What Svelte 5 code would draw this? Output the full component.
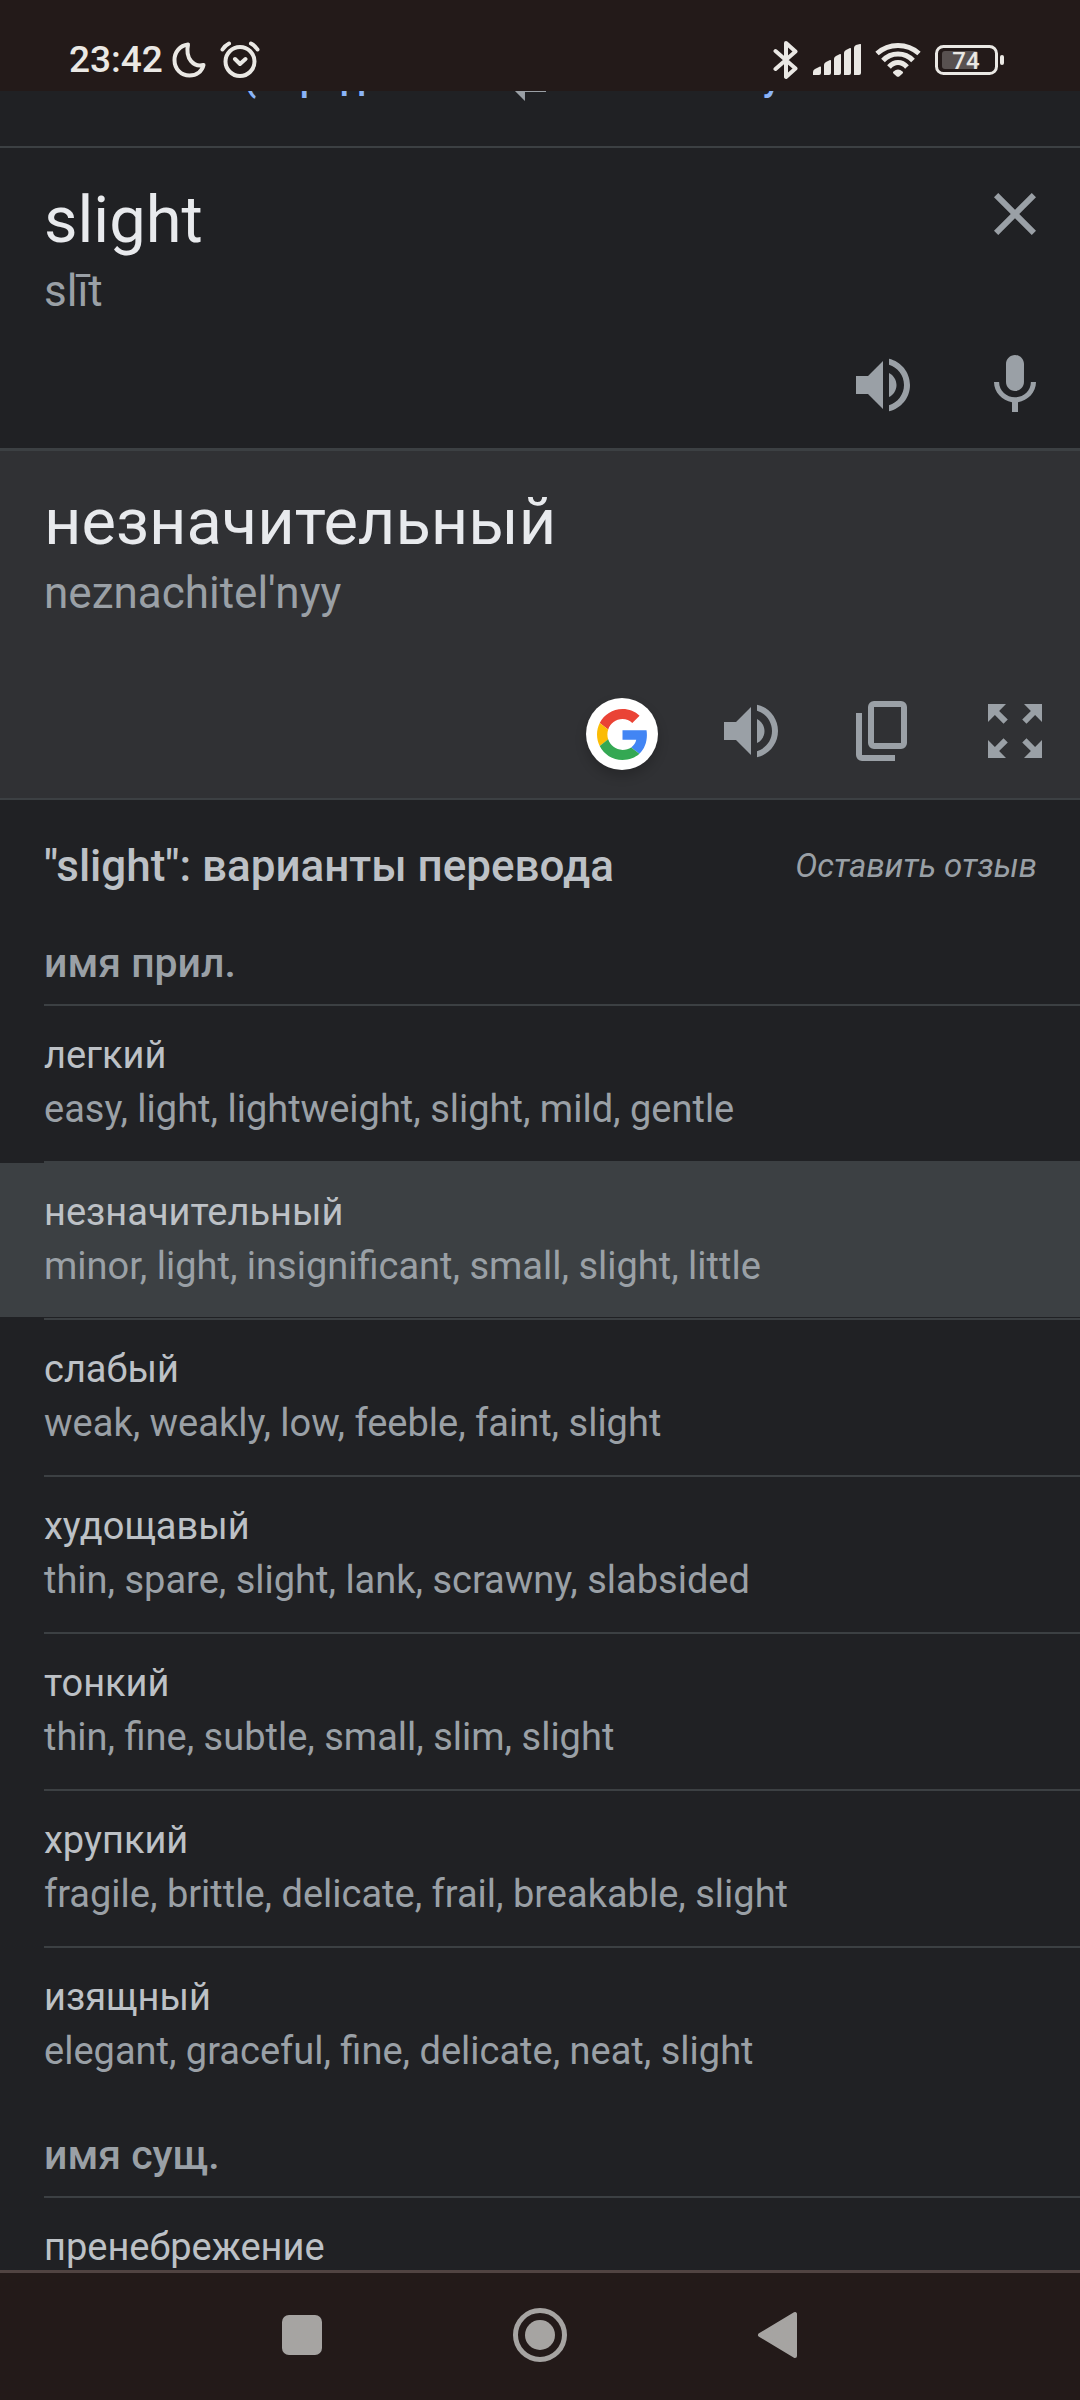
<script lang="ts">
  let query = $state('slight');

  const adjectives = [
    { word: 'легкий', back: 'easy, light, lightweight, slight, mild, gentle' },
    { word: 'незначительный', back: 'minor, light, insignificant, small, slight, little', active: true },
    { word: 'слабый', back: 'weak, weakly, low, feeble, faint, slight' },
    { word: 'худощавый', back: 'thin, spare, slight, lank, scrawny, slabsided' },
    { word: 'тонкий', back: 'thin, fine, subtle, small, slim, slight' },
    { word: 'хрупкий', back: 'fragile, brittle, delicate, frail, breakable, slight' },
    { word: 'изящный', back: 'elegant, graceful, fine, delicate, neat, slight' }
  ];
  const groups = [
    { name: 'имя прил.', items: adjectives },
    { name: 'имя сущ.', items: [{ word: 'пренебрежение', back: '' }] }
  ];
</script>

{#snippet speaker()}
  <svg viewBox="0 0 24 24"><path d="M3 9v6h4l5 5V4L7 9H3zm13.5 3c0-1.77-1.02-3.29-2.5-4.03v8.05c1.48-.73 2.5-2.25 2.5-4.02zM14 3.23v2.06c2.89.86 5 3.54 5 6.71s-2.11 5.85-5 6.71v2.06c4.01-.91 7-4.49 7-8.77s-2.99-7.86-7-8.77z" /></svg>
{/snippet}

<div class="screen">
  <header class="status">
    <div class="left">
      <time>23:42</time>
      <svg class="moon" viewBox="0 0 34 36"><path d="M16 2.5C8 3.5 2.500 10 2.500 18c0 9 6.500 15.500 15 15.500 7 0 12.500-4 14-10.500C22 25.500 13 17 16 2.500z" /></svg>
      <svg class="alarm" viewBox="0 0 40 38">
        <circle cx="20" cy="20.500" r="14.500" />
        <path d="M2.500 8.500Q5 4.500 9 2.500M37.500 8.500Q35 4.500 31 2.500M15 18l5 5 5.500-5" />
      </svg>
    </div>
    <div class="right">
      <svg class="bt" viewBox="0 0 26 40"><path d="M2.500 11l20 17.500L13 37V3l9.500 8.500L2.500 29" /></svg>
      <svg class="signal" viewBox="0 0 48 32"><path d="M0 31v-3q0-2 2-3l5-2.500q1-.5 1 1V29q0 2-2 2zM11 31V21q0-2 2-3l4-2q1-.5 1 1v12q0 2-2 2zM21 31V15q0-2 2-3l4-2q1-.5 1 1v18q0 2-2 2zM31 31V9q0-2 2-3l4-2q1-.5 1 1v24q0 2-2 2zM41 31V4q0-2 2-3l4-1q1-.5 1 1v28q0 2-2 2z" /></svg>
      <svg class="wifi" viewBox="0 0 46 34">
        <path class="arc" d="M2 10.500Q11 2.500 23 2.500T44 10.500M8 17.500Q14 11 23 11T38 17.500M14 24Q18 19.500 23 19.500T32 24" />
        <path d="M18.500 28.500q4.500-4 9 0c1 1 .5 1.500-.5 2.500l-2.500 2.200q-1.500 1-3 0L19 31c-1-1-1.500-1.500-.5-2.500z" />
      </svg>
      <svg class="battery" viewBox="0 0 70 30">
        <rect class="shell" x="1.500" y="1.500" width="60" height="27" rx="7" />
        <rect class="charge" x="7" y="6" width="36" height="18" rx="3" />
        <rect x="65" y="10" width="4" height="10" rx="2" />
        <text x="31" y="24" text-anchor="middle">74</text>
      </svg>
    </div>
  </header>

  <main>
    <nav class="langs">
      <button class="lang">английский (определен автоматически)</button>
      <button class="swap" aria-label="Поменять языки"><svg viewBox="0 0 24 24"><path d="M6.990 11L3 15l3.990 4v-3H14v-2H6.990v-3zM21 9l-3.990-4v3H10v2h7.010v3L21 9z" /></svg></button>
      <button class="lang">Русский</button>
    </nav>

    <section class="source">
      <div class="entry">
        <div class="texts">
          <input class="big" type="text" aria-label="Исходный текст" bind:value={query} />
          <p class="sub">slīt</p>
        </div>
        <button class="icon" aria-label="Очистить"><svg viewBox="0 0 24 24"><path d="M19 6.410L17.590 5 12 10.590 6.410 5 5 6.410 10.590 12 5 17.590 6.410 19 12 13.410 17.590 19 19 17.590 13.410 12z" /></svg></button>
      </div>
      <div class="actions">
        <button class="icon" aria-label="Прослушать">{@render speaker()}</button>
        <button class="icon" aria-label="Голосовой ввод"><svg viewBox="0 0 24 24"><path d="M12 14c1.660 0 2.990-1.340 2.990-3L15 5c0-1.660-1.340-3-3-3S9 3.340 9 5v6c0 1.660 1.340 3 3 3zm5.300-3c0 3-2.540 5.100-5.300 5.100S6.700 14 6.700 11H5c0 3.410 2.720 6.230 6 6.720V21h2v-3.280c3.280-.48 6-3.300 6-6.720h-1.700z" /></svg></button>
      </div>
    </section>

    <section class="target">
      <div>
        <p class="big">незначительный</p>
        <p class="sub">neznachitel'nyy</p>
      </div>
      <div class="tools">
        <button class="google" aria-label="Искать в Google">
          <svg viewBox="0 0 48 48">
            <path fill="#ea4335" d="M24 9.500c3.540 0 6.710 1.220 9.210 3.600l6.850-6.850C35.900 2.380 30.470 0 24 0 14.620 0 6.510 5.380 2.560 13.220l7.980 6.190C12.430 13.720 17.740 9.500 24 9.500z" />
            <path fill="#4285f4" d="M46.980 24.550c0-1.570-.15-3.090-.38-4.550H24v9.020h12.940c-.58 2.960-2.260 5.480-4.780 7.180l7.730 6c4.510-4.180 7.090-10.360 7.090-17.650z" />
            <path fill="#fbbc05" d="M10.530 28.590c-.48-1.450-.76-2.990-.76-4.590s.27-3.140.76-4.590l-7.980-6.190C.92 16.460 0 20.120 0 24c0 3.880.92 7.540 2.560 10.780l7.970-6.190z" />
            <path fill="#34a853" d="M24 48c6.480 0 11.930-2.130 15.890-5.810l-7.730-6c-2.150 1.450-4.920 2.300-8.160 2.300-6.260 0-11.570-4.220-13.470-9.910l-7.980 6.190C6.510 42.620 14.620 48 24 48z" />
          </svg>
        </button>
        <div class="actions">
          <button class="icon" aria-label="Прослушать перевод">{@render speaker()}</button>
          <button class="icon" aria-label="Копировать"><svg viewBox="0 0 24 24"><path d="M9 18q-.825 0-1.412-.587Q7 16.825 7 16V4q0-.825.588-1.413Q8.175 2 9 2h9q.825 0 1.413.587Q20 3.175 20 4v12q0 .825-.587 1.413Q18.825 18 18 18Zm0-2h9V4H9v12Zm-4 6q-.825 0-1.413-.587Q3 20.825 3 20V6h2v14h11v2Z" /></svg></button>
          <button class="icon" aria-label="На весь экран"><svg viewBox="0 0 24 24"><path d="M15 3l2.300 2.300-2.890 2.870 1.420 1.420L18.700 6.700 21 9V3h-6zM3 9l2.300-2.300 2.870 2.890 1.420-1.420L6.700 5.300 9 3H3v6zm6 12l-2.300-2.300 2.890-2.870-1.420-1.420L5.300 17.300 3 15v6h6zm12-6l-2.300 2.300-2.870-2.890-1.420 1.420 2.890 2.870L15 21h6v-6z" /></svg></button>
        </div>
      </div>
    </section>

    <section class="variants">
      <div class="title">
        <h1>"slight": варианты перевода</h1>
        <a href="#feedback">Оставить отзыв</a>
      </div>
      {#each groups as group}
        <h2>{group.name}</h2>
        <ul>
          {#each group.items as item}
            <li>
              <button class="row" class:active={item.active}>
                <span class="word">{item.word}</span>
                <span class="back">{item.back}</span>
              </button>
            </li>
          {/each}
        </ul>
      {/each}
    </section>
  </main>

  <footer>
    <button aria-label="Недавние"><svg viewBox="0 0 54 54"><rect x="7" y="7" width="40" height="40" rx="7" /></svg></button>
    <button aria-label="Домой"><svg viewBox="0 0 54 54"><circle class="ring" cx="27" cy="27" r="24.500" /><circle cx="27" cy="27" r="15" /></svg></button>
    <button aria-label="Назад"><svg viewBox="0 0 54 54"><path class="tri" d="M9 27L44 6v42z" /></svg></button>
  </footer>
</div>

<style>
  :global(body) {
    margin: 0;
    background: #202124;
  }
  .screen {
    height: 100vh;
    display: flex;
    flex-direction: column;
    background: #202124;
    color: #9aa0a6;
    font-family: Roboto, 'Noto Sans', sans-serif;
  }
  button,
  input {
    margin: 0;
    padding: 0;
    border: 0;
    background: none;
    color: inherit;
    font: inherit;
    outline: none;
  }
  h1,
  h2,
  p,
  ul {
    margin: 0;
    padding: 0;
    list-style: none;
  }
  svg {
    display: block;
    fill: currentColor;
  }

  .status {
    flex: none;
    height: 91px;
    box-sizing: border-box;
    padding: 28px 75px 0 69px;
    display: flex;
    justify-content: space-between;
    align-items: center;
    background: #231a19;
    color: #eae8e4;
  }
  .left,
  .right {
    display: flex;
    align-items: center;
  }
  .right {
    gap: 14px;
  }
  time {
    font-size: 37px;
    font-weight: 500;
    line-height: 44px;
    margin-right: 9px;
  }
  .moon,
  .alarm,
  .bt {
    fill: none;
    stroke: currentColor;
    stroke-width: 4;
    stroke-linecap: round;
    stroke-linejoin: round;
  }
  .moon {
    width: 34px;
    height: 36px;
    margin-right: 14px;
  }
  .alarm {
    width: 40px;
    height: 38px;
  }
  .bt {
    width: 26px;
    height: 40px;
  }
  .signal {
    width: 48px;
    height: 32px;
  }
  .wifi {
    width: 46px;
    height: 34px;
  }
  .arc {
    fill: none;
    stroke: currentColor;
    stroke-width: 5;
  }
  .battery {
    width: 70px;
    height: 30px;
  }
  .shell {
    fill: none;
    stroke: currentColor;
    stroke-width: 3;
  }
  .charge {
    fill: #585150;
  }
  .battery text {
    font-size: 24px;
    font-weight: 500;
  }

  main {
    flex: 1;
    min-height: 0;
    overflow: hidden;
  }
  .langs {
    height: 55px;
    overflow: hidden;
    border-bottom: 2px solid #3c4043;
    display: flex;
    align-items: flex-end;
  }
  .lang {
    flex: 1;
    min-width: 0;
    padding: 0 60px 47px 27px;
    overflow: hidden;
    text-overflow: ellipsis;
    white-space: nowrap;
    color: #8ab4f8;
    font-size: 38px;
    font-weight: 500;
    line-height: 44px;
  }
  .swap {
    padding-bottom: 30px;
  }
  .swap svg,
  .icon svg {
    width: 72px;
    height: 72px;
  }

  .source {
    padding: 30px 29px 27px 44px;
  }
  .entry {
    display: flex;
    align-items: flex-start;
  }
  .texts {
    flex: 1;
    min-width: 0;
    min-height: 171px;
  }
  .big {
    display: block;
    width: 100%;
    height: 84px;
    margin-bottom: 4px;
    font-size: 65px;
    line-height: 84px;
    color: #e8eaed;
  }
  .sub {
    font-size: 44px;
    line-height: 50px;
  }
  .actions {
    display: flex;
    justify-content: flex-end;
    gap: 60px;
  }

  .target {
    padding: 29px 29px 28px 44px;
    border-top: 3px solid #3c4043;
    background: #303134;
  }
  .tools {
    margin-top: 77px;
    display: flex;
    justify-content: flex-end;
    align-items: flex-end;
    gap: 57px;
  }
  .tools .actions {
    padding-bottom: 3px;
  }
  .google {
    width: 72px;
    height: 72px;
    border-radius: 50%;
    background: #fff;
    display: grid;
    place-items: center;
    box-shadow: 0 6px 12px rgba(0, 0, 0, 0.2);
  }
  .google svg {
    width: 51px;
    height: 51px;
  }

  .variants {
    border-top: 2px solid #3c4043;
  }
  .title {
    padding: 36px 43px 15px 44px;
    display: flex;
    justify-content: space-between;
    align-items: center;
  }
  h1 {
    color: #bdc1c6;
    font-size: 44px;
    font-weight: 500;
    line-height: 60px;
  }
  .title a {
    color: inherit;
    font-size: 33px;
    font-style: italic;
    line-height: 60px;
    text-decoration: none;
  }
  h2 {
    padding: 25px 44px 14px;
    font-size: 41px;
    font-weight: 500;
    line-height: 54px;
  }
  li {
    padding-bottom: 1px;
  }
  li::before {
    content: '';
    display: block;
    height: 2px;
    margin-left: 44px;
    background: #3c4043;
  }
  .row {
    width: 100%;
    min-height: 154px;
    padding: 22px 44px 24px;
    display: flex;
    flex-direction: column;
    text-align: left;
    font-size: 38px;
    line-height: 54px;
  }
  .active {
    background: #3c4043;
  }
  .word {
    color: #bdc1c6;
  }

  footer {
    flex: none;
    height: 127px;
    border-top: 3px solid #514442;
    background: #231a19;
    color: #a6a4a2;
    display: flex;
    justify-content: center;
  }
  footer button {
    width: 22%;
    padding-bottom: 3px;
    display: grid;
    place-items: center;
  }
  footer svg {
    width: 54px;
    height: 54px;
  }
  .ring {
    fill: none;
    stroke: currentColor;
    stroke-width: 5;
  }
  .tri {
    stroke: currentColor;
    stroke-width: 4;
    stroke-linejoin: round;
  }
</style>
